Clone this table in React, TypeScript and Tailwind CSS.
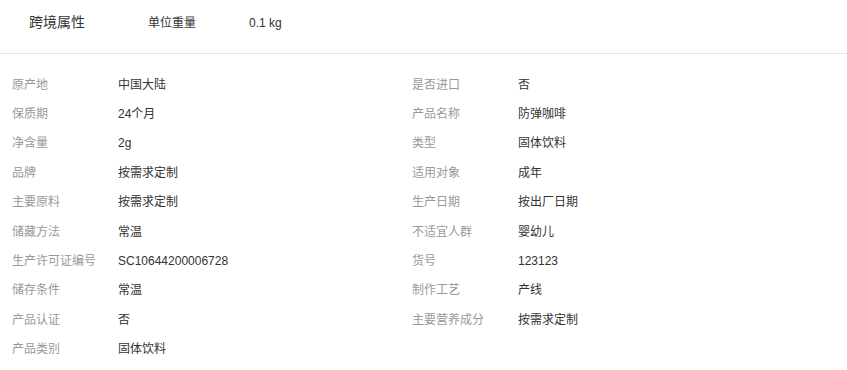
const rows: [string, string, string?, string?][] = [
  ['原产地', '中国大陆', '是否进口', '否'],
  ['保质期', '24个月', '产品名称', '防弹咖啡'],
  ['净含量', '2g', '类型', '固体饮料'],
  ['品牌', '按需求定制', '适用对象', '成年'],
  ['主要原料', '按需求定制', '生产日期', '按出厂日期'],
  ['储藏方法', '常温', '不适宜人群', '婴幼儿'],
  ['生产许可证编号', 'SC10644200006728', '货号', '123123'],
  ['储存条件', '常温', '制作工艺', '产线'],
  ['产品认证', '否', '主要营养成分', '按需求定制'],
  ['产品类别', '固体饮料'],
]

const Cell = ({ label, value }: { label?: string; value?: string }) => (
  <div className="flex items-center w-[400px]">
    <div className="w-[106px] text-[#999]">{label}</div>
    <div className="text-[#333]">{value}</div>
  </div>
)

export default function App() {
  return (
    <div className="w-[847px] h-[370px] bg-white overflow-hidden font-['Liberation_Sans','Noto_Sans_CJK_SC',sans-serif]">
      <div className="h-[45px] flex items-center">
        <div className="pl-[29px] w-[148px] text-[14px] text-[#333]">跨境属性</div>
        <div className="w-[101px] text-[12px] text-[#333]">单位重量</div>
        <div className="text-[12px] text-[#333]">0.1 kg</div>
      </div>
      <div className="mt-[8px] border-t border-[#e5e5e5]" />
      <div className="pt-[16px] pl-[12px] text-[12px]">
        {rows.map(([l1, v1, l2, v2]) => (
          <div key={l1} className="flex h-[29.4px] items-center">
            <Cell label={l1} value={v1} />
            <Cell label={l2} value={v2} />
          </div>
        ))}
      </div>
    </div>
  )
}
